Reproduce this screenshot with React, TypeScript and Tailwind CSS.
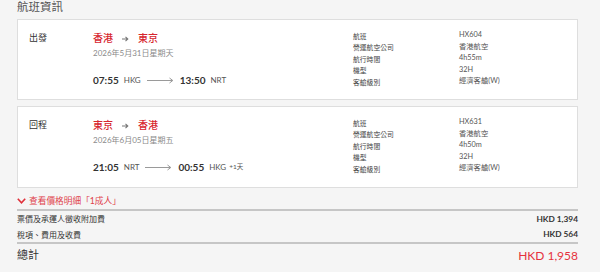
import React from "react";

const FONT = { fontFamily: "Lato, 'Noto Sans CJK TC', 'Noto Sans', sans-serif" };

function SmallArrow() {
  return (
    <svg width="7" height="6" viewBox="0 0 7 6" className="mx-[9px]">
      <path d="M0 3 H5.5 M3.5 0.8 L5.8 3 L3.5 5.2" stroke="#777" strokeWidth="1.1" fill="none" />
    </svg>
  );
}

function LongArrow() {
  return (
    <svg width="27" height="7" viewBox="0 0 27 7" className="mx-[6px]">
      <path d="M0 3.5 H25.5 M22.5 1 L25.8 3.5 L22.5 6" stroke="#9a9a9a" strokeWidth="1" fill="none" />
    </svg>
  );
}

type Leg = {
  label: string;
  from: string;
  to: string;
  date: string;
  dep: string;
  depCode: string;
  arr: string;
  arrCode: string;
  extra?: string;
  flight: string;
  duration: string;
  h: string;
};

function Card({ leg }: { leg: Leg }) {
  const rows: [string, string][] = [
    ["航班", leg.flight],
    ["營運航空公司", "香港航空"],
    ["航行時間", leg.duration],
    ["機型", "32H"],
    ["客艙級別", "經濟客艙(W)"],
  ];
  return (
    <div className={`${leg.h} border border-[#dedede] bg-white flex pl-[11px] pt-[11px]`}>
      <div className="w-[64px] text-[9px] leading-[13px] text-[#333]">{leg.label}</div>
      <div className="w-[260px] flex flex-col">
        <div className="flex items-center h-[15px] text-[10px] text-[#d7262f] font-medium">
          <span>{leg.from}</span>
          <SmallArrow />
          <span>{leg.to}</span>
        </div>
        <div className="h-[14px] leading-[14px] text-[8px] text-[#8a8a8a]">{leg.date}</div>
        <div className="mt-[13px] h-[14px] flex items-center text-[#333]">
          <span className="text-[10px] font-bold">{leg.dep}</span>
          <span className="ml-[5px] text-[8px] text-[#555]">{leg.depCode}</span>
          <LongArrow />
          <span className="text-[10px] font-bold">{leg.arr}</span>
          <span className="ml-[5px] text-[8px] text-[#555]">{leg.arrCode}</span>
          {leg.extra && <span className="ml-[3px] text-[6.5px] text-[#555]">{leg.extra}</span>}
        </div>
      </div>
      <div className="mt-[-1px] flex flex-col">
        {rows.map(([k, v]) => (
          <div key={k} className="flex h-[11.5px] items-center">
            <div className="w-[106px] text-[6.8px] text-[#444]">{k}</div>
            <div className="text-[7.3px] text-[#555]">{v}</div>
          </div>
        ))}
      </div>
    </div>
  );
}

export default function App() {
  const legs: Leg[] = [
    {
      label: "出發",
      from: "香港",
      to: "東京",
      date: "2026年5月31日星期天",
      dep: "07:55",
      depCode: "HKG",
      arr: "13:50",
      arrCode: "NRT",
      flight: "HX604",
      duration: "4h55m",
      h: "h-[81px]",
    },
    {
      label: "回程",
      from: "東京",
      to: "香港",
      date: "2026年6月05日星期五",
      dep: "21:05",
      depCode: "NRT",
      arr: "00:55",
      arrCode: "HKG",
      extra: "+1天",
      flight: "HX631",
      duration: "4h50m",
      h: "h-[82px]",
    },
  ];
  return (
    <div className="w-[600px] h-[272px] bg-[#f5f5f5] overflow-hidden" style={FONT}>
      <div className="ml-[17px] w-[561px] flex flex-col">
        <div className="h-[14px] leading-[14px] text-[11.5px] text-[#555]">航班資訊</div>
        <div className="mt-[5px]">
          <Card leg={legs[0]} />
        </div>
        <div className="mt-[6px]">
          <Card leg={legs[1]} />
        </div>
        <div className="mt-[6px] h-[13px] flex items-center text-[#e0404a]">
          <svg width="9" height="6" viewBox="0 0 9 6">
            <path d="M0.8 0.8 L4.5 4.8 L8.2 0.8" stroke="#e0303a" strokeWidth="1.6" fill="none" />
          </svg>
          <span className="ml-[3px] text-[8.7px]">查看價格明細「1成人」</span>
        </div>
        <div className="mt-[2px] h-[2px] bg-[#c6c6c6]" />
        <div className="h-[16px] flex items-center justify-between text-[#333]">
          <span className="text-[8px]">票價及承運人徵收附加費</span>
          <span className="text-[8.3px] font-bold">HKD 1,394</span>
        </div>
        <div className="h-[15px] flex items-center justify-between text-[#333]">
          <span className="text-[8px]">稅項、費用及收費</span>
          <span className="text-[8.3px] font-bold">HKD 564</span>
        </div>
        <div className="h-[2px] bg-[#c6c6c6]" />
        <div className="h-[23px] flex items-center justify-between">
          <span className="text-[11px] text-[#333]">總計</span>
          <span className="text-[12px] text-[#e5323d]">HKD 1,958</span>
        </div>
      </div>
    </div>
  );
}
